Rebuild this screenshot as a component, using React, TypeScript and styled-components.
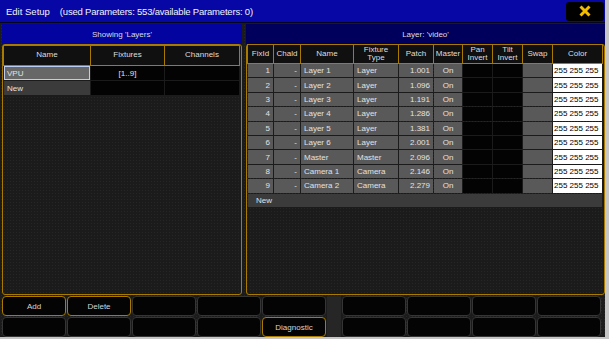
import React from 'react';
import styled, { createGlobalStyle } from 'styled-components';

const gold = '#a87b00';

const GlobalStyle = createGlobalStyle`
  body {
    margin: 0;
    background: #c6c6c6;
    font-family: 'Liberation Sans', Arial, sans-serif;
  }
`;

const Window = styled.div`
  width: 605px;
  height: 337px;
  display: flex;
  flex-direction: column;
  background-color: #1b1b1b;
  background-image: radial-gradient(#262626 0.7px, transparent 0.8px);
  background-size: 3px 3px;
`;

const TitleBar = styled.div`
  height: 22px;
  flex: none;
  display: flex;
  align-items: center;
  padding-left: 6px;
  background: #0707a6;
  border-bottom: 1px solid #05051c;
  color: #f2f2f2;
  font-size: 9.5px;
  .info {
    margin-left: 10px;
    letter-spacing: -0.2px;
  }
`;

const CloseButton = styled.div`
  margin-left: auto;
  margin-right: 1px;
  width: 38px;
  height: 19px;
  border-radius: 3px;
  background: #000;
  display: flex;
  align-items: center;
  justify-content: center;
`;

const Main = styled.div`
  height: 271px;
  flex: none;
  display: flex;
  gap: 4px;
  padding: 1px 0 0 2px;
`;

const Panel = styled.div<{ $width?: number }>`
  display: flex;
  flex-direction: column;
  width: ${(p) => (p.$width ? `${p.$width}px` : 'auto')};
  flex: ${(p) => (p.$width ? 'none' : '1')};
`;

const PanelHeader = styled.div<{ $focused?: boolean }>`
  height: 20px;
  flex: none;
  display: flex;
  align-items: center;
  justify-content: center;
  background: ${(p) => (p.$focused ? '#0303a0' : '#00005c')};
  color: #dcdcdc;
  font-size: 8px;
`;

const PanelBody = styled.div`
  flex: 1;
  border: 1px solid ${gold};
  border-radius: 3px;
  padding: 0 2px 0 1px;
`;

const Grid = styled.div<{ $cols: string }>`
  display: grid;
  grid-template-columns: ${(p) => p.$cols};
  column-gap: 1px;
  row-gap: 1px;
`;

const HeadCell = styled.div<{ $h: number }>`
  height: ${(p) => p.$h}px;
  box-sizing: border-box;
  outline: 1px solid ${gold};
  background: #101010;
  color: #dedede;
  font-size: 8px;
  line-height: 8.5px;
  display: flex;
  align-items: center;
  justify-content: center;
  text-align: center;
  white-space: pre-line;
`;

type Tone = 'gray' | 'black' | 'white' | 'dim' | 'selected';

const toneBg: Record<Tone, string> = {
  gray: '#595959',
  black: '#030303',
  white: '#ffffff',
  dim: '#3b3b3b',
  selected: '#676767',
};

const Cell = styled.div<{ $tone: Tone; $align?: 'left' | 'right' | 'center'; $h: number }>`
  height: ${(p) => p.$h}px;
  box-sizing: border-box;
  background: ${(p) => toneBg[p.$tone]};
  color: ${(p) => (p.$tone === 'white' ? '#000' : '#e2e2e2')};
  font-size: 8px;
  display: flex;
  align-items: center;
  padding: 0 ${(p) => (p.$tone === 'white' ? 1 : 3)}px;
  justify-content: ${(p) =>
    p.$align === 'right' ? 'flex-end' : p.$align === 'center' ? 'center' : 'flex-start'};
  white-space: nowrap;
  overflow: hidden;
  ${(p) => (p.$tone === 'selected' ? 'outline: 1px solid #b9cdf5; outline-offset: -1px;' : '')}
`;

const NewRow = styled.div`
  grid-column: 1 / -1;
  height: 13.4px;
  background: #3b3b3b;
  color: #e2e2e2;
  font-size: 8px;
  display: flex;
  align-items: center;
  padding-left: 8px;
`;

const LeftTable = styled(Grid)`
  margin-top: 1px;
`;

const ButtonBar = styled.div`
  margin: 1px 0 0 2px;
  display: grid;
  grid-template-columns: repeat(5, 64px) 14px repeat(4, 64px);
  grid-template-rows: 20px 20px;
  column-gap: 1px;
  row-gap: 1px;
`;

const Spacer = styled.div`
  grid-column: 6;
  grid-row: 1 / 3;
  background: #262626;
`;

const Key = styled.div<{ $active?: boolean }>`
  box-sizing: border-box;
  border: 1px solid ${(p) => (p.$active ? gold : '#353535')};
  border-radius: 4px;
  background: #040404;
  color: #d4d4d4;
  font-size: 8px;
  display: flex;
  align-items: center;
  justify-content: center;
`;

const fixtures = [
  { id: 1, name: 'Layer 1', type: 'Layer', patch: '1.001' },
  { id: 2, name: 'Layer 2', type: 'Layer', patch: '1.096' },
  { id: 3, name: 'Layer 3', type: 'Layer', patch: '1.191' },
  { id: 4, name: 'Layer 4', type: 'Layer', patch: '1.286' },
  { id: 5, name: 'Layer 5', type: 'Layer', patch: '1.381' },
  { id: 6, name: 'Layer 6', type: 'Layer', patch: '2.001' },
  { id: 7, name: 'Master', type: 'Master', patch: '2.096' },
  { id: 8, name: 'Camera 1', type: 'Camera', patch: '2.146' },
  { id: 9, name: 'Camera 2', type: 'Camera', patch: '2.279' },
];

const rightHeads = ['FixId', 'Chald', 'Name', 'Fixture\nType', 'Patch', 'Master', 'Pan\nInvert', 'Tilt\nInvert', 'Swap', 'Color'];
const rightCols = '25px 26px 52px 44px 34px 28px 29px 29px 29px 49px';
const leftCols = '86px 73px 74px';

const topKeys = ['Add', 'Delete', '', '', ''];
const bottomKeys = ['', '', '', '', 'Diagnostic'];

const App: React.FC = () => {
  const rh = 13.4;
  return (
    <>
      <GlobalStyle />
      <Window>
        <TitleBar>
          <span>Edit Setup</span>
          <span className="info">(used Parameters: 553/available Parameters: 0)</span>
          <CloseButton>
            <svg width="12" height="12" viewBox="0 0 12 12">
              <path d="M1.5 1.5 L10.5 10.5 M10.5 1.5 L1.5 10.5" stroke="#f2bd00" strokeWidth="3" />
            </svg>
          </CloseButton>
        </TitleBar>

        <Main>
          <Panel $width={240}>
            <PanelHeader $focused>Showing 'Layers'</PanelHeader>
            <PanelBody>
              <LeftTable $cols={leftCols}>
                <HeadCell $h={19}>Name</HeadCell>
                <HeadCell $h={19}>Fixtures</HeadCell>
                <HeadCell $h={19}>Channels</HeadCell>
                <Cell $tone="selected" $h={14}>VPU</Cell>
                <Cell $tone="black" $align="center" $h={14}>[1..9]</Cell>
                <Cell $tone="black" $h={14} />
                <Cell $tone="dim" $h={14}>New</Cell>
                <Cell $tone="black" $h={14} />
                <Cell $tone="black" $h={14} />
              </LeftTable>
            </PanelBody>
          </Panel>

          <Panel>
            <PanelHeader>Layer: 'video'</PanelHeader>
            <PanelBody>
              <Grid $cols={rightCols}>
                {rightHeads.map((h) => (
                  <HeadCell key={h} $h={18}>{h}</HeadCell>
                ))}
                {fixtures.map((f) => (
                  <React.Fragment key={f.id}>
                    <Cell $tone="gray" $align="right" $h={rh}>{f.id}</Cell>
                    <Cell $tone="gray" $align="right" $h={rh}>-</Cell>
                    <Cell $tone="gray" $h={rh}>{f.name}</Cell>
                    <Cell $tone="gray" $h={rh}>{f.type}</Cell>
                    <Cell $tone="gray" $align="right" $h={rh}>{f.patch}</Cell>
                    <Cell $tone="gray" $align="center" $h={rh}>On</Cell>
                    <Cell $tone="black" $h={rh} />
                    <Cell $tone="black" $h={rh} />
                    <Cell $tone="gray" $h={rh} />
                    <Cell $tone="white" $h={rh}>255 255 255</Cell>
                  </React.Fragment>
                ))}
                <NewRow>New</NewRow>
              </Grid>
            </PanelBody>
          </Panel>
        </Main>

        <ButtonBar>
          {topKeys.map((k, i) => (
            <Key key={`t${i}`} $active={k !== ''}>{k}</Key>
          ))}
          <Spacer />
          {[0, 1, 2, 3].map((i) => (
            <Key key={`tr${i}`} />
          ))}
          {bottomKeys.map((k, i) => (
            <Key key={`b${i}`} $active={k !== ''}>{k}</Key>
          ))}
          {[0, 1, 2, 3].map((i) => (
            <Key key={`br${i}`} />
          ))}
        </ButtonBar>
      </Window>
    </>
  );
};

export default App;
